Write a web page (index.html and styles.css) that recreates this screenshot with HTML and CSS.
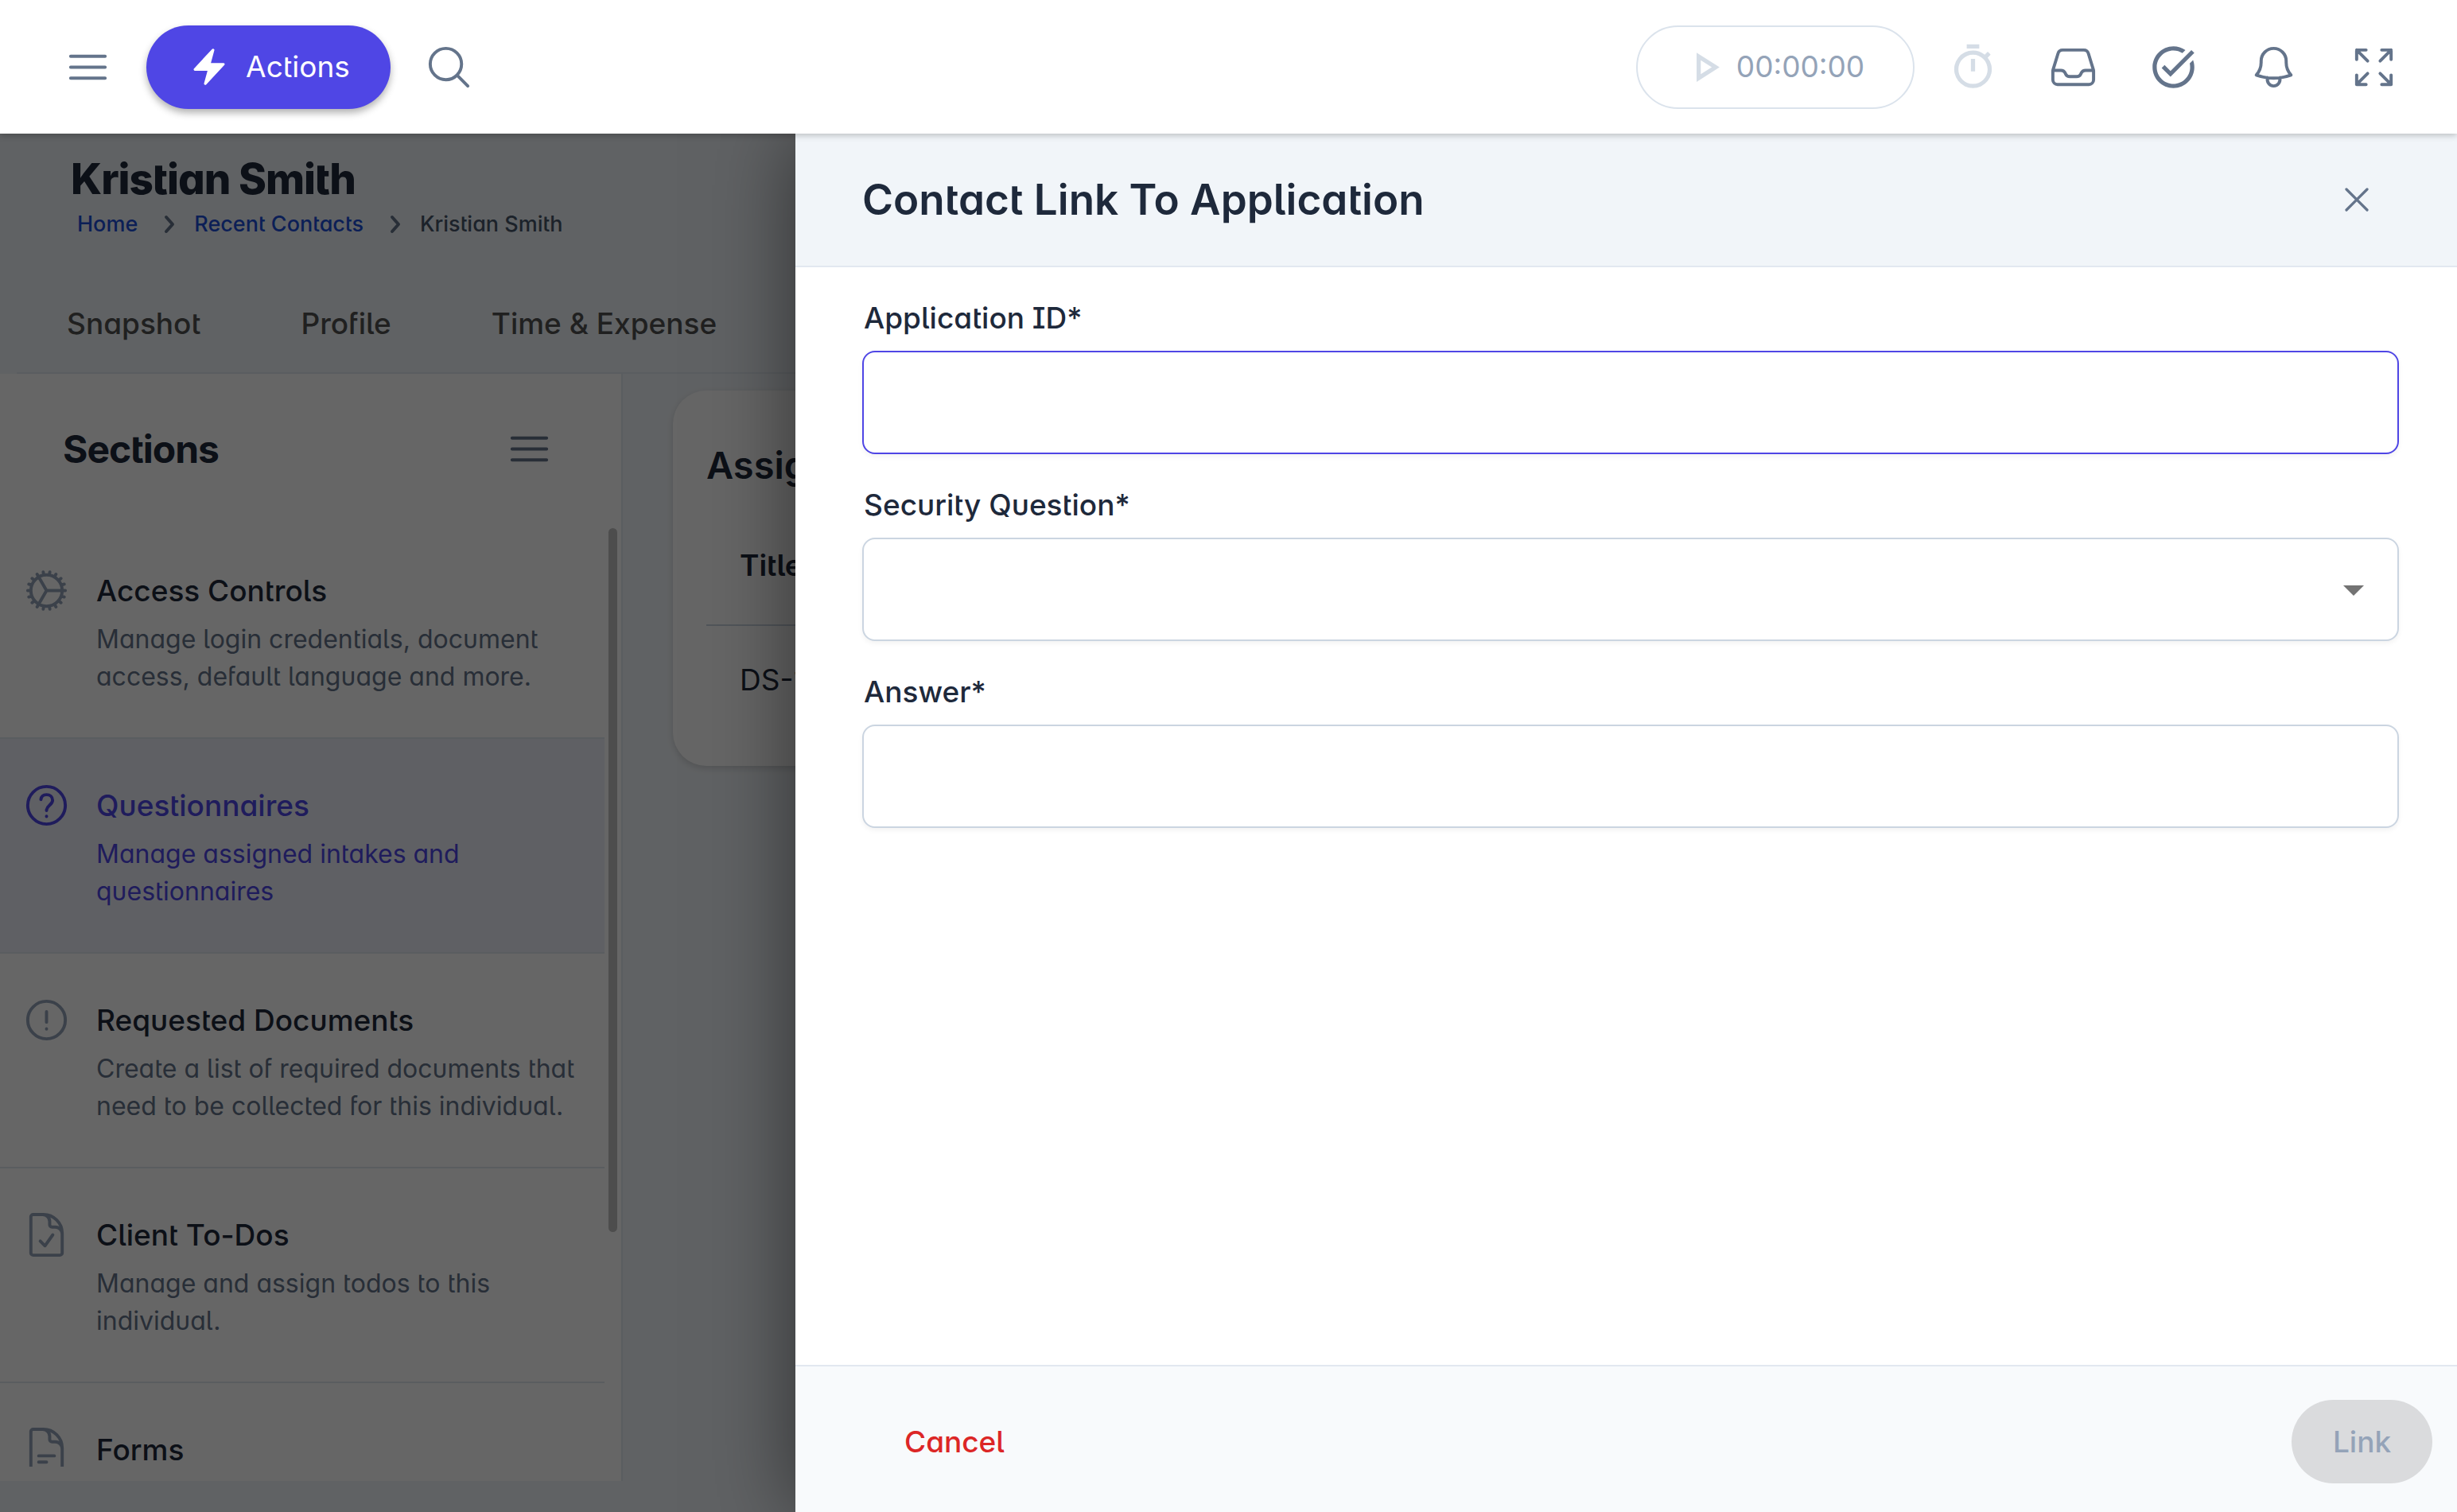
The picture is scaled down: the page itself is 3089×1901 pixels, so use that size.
FILE: index.html
```html
<!DOCTYPE html>
<html lang="en">
<head>
<meta charset="utf-8">
<title>Kristian Smith</title>
<link rel="stylesheet" href="styles.css">
</head>
<body>
<svg class="defs" aria-hidden="true">
  <symbol id="bars" viewBox="0 0 24 24"><path d="M3.75 6.75h16.5M3.75 12h16.5m-16.5 5.25h16.5"/></symbol>
  <symbol id="doc" viewBox="0 0 24 24"><path d="M19.5 14.25v-2.625a3.375 3.375 0 0 0-3.375-3.375h-1.5A1.125 1.125 0 0 1 13.5 7.125v-1.5a3.375 3.375 0 0 0-3.375-3.375H8.25m2.25 0H5.625c-.621 0-1.125.504-1.125 1.125v17.25c0 .621.504 1.125 1.125 1.125h12.75c.621 0 1.125-.504 1.125-1.125V11.25a9 9 0 0 0-9-9Z"/></symbol>
</svg>
<header class="topbar">
  <button class="icon-btn" aria-label="Menu"><svg class="icon"><use href="#bars"/></svg></button>
  <button class="actions"><svg class="bolt" viewBox="0 0 24 24"><path d="M14.615 1.595a.75.75 0 0 1 .359.852L12.982 9.75h7.268a.75.75 0 0 1 .548 1.262l-10.5 11.25a.75.75 0 0 1-1.272-.71l1.992-7.302H3.75a.75.75 0 0 1-.548-1.262l10.5-11.25a.75.75 0 0 1 .913-.143Z"/></svg>Actions</button>
  <button class="icon-btn" aria-label="Search"><svg class="icon" viewBox="0 0 24 24"><path d="m21 21-5.197-5.197m0 0A7.5 7.5 0 1 0 5.196 5.196a7.5 7.5 0 0 0 10.607 10.607Z"/></svg></button>
  <div class="tools">
    <button class="timer"><svg class="solid" viewBox="0 0 24 24"><path d="M8 5v14l11-7L8 5Zm2 3.64L15.27 12 10 15.36V8.64Z"/></svg>00:00:00</button>
    <button class="icon-btn" aria-label="Stopwatch"><svg class="solid" viewBox="0 0 24 24"><path d="M15 1H9v2h6V1Zm-4 13h2V8h-2v6Zm8.030-6.610 1.420-1.420c-.430-.510-.900-.990-1.410-1.410l-1.420 1.420A8.962 8.962 0 0 0 12 4a9 9 0 1 0 7.030 3.390ZM12 20c-3.870 0-7-3.130-7-7s3.130-7 7-7 7 3.130 7 7-3.130 7-7 7Z"/></svg></button>
    <button class="icon-btn" aria-label="Inbox"><svg class="icon" viewBox="0 0 24 24"><path d="M2.250 13.500h3.860a2.250 2.250 0 0 1 2.012 1.244l.256.512a2.250 2.250 0 0 0 2.013 1.244h3.218a2.250 2.250 0 0 0 2.013-1.244l.256-.512a2.250 2.250 0 0 1 2.013-1.244h3.859m-19.500.338V18a2.250 2.250 0 0 0 2.250 2.250h15A2.250 2.250 0 0 0 21.750 18v-4.162c0-.224-.034-.447-.1-.661L19.240 5.338a2.250 2.250 0 0 0-2.150-1.588H6.911a2.250 2.250 0 0 0-2.150 1.588L2.350 13.177a2.250 2.250 0 0 0-.1.661Z"/></svg></button>
    <button class="icon-btn" aria-label="Tasks"><svg class="solid dark" viewBox="0 0 24 24"><path d="M22 5.180 10.590 16.600l-4.240-4.240 1.410-1.410 2.830 2.830 10-10L22 5.180ZM12 20c-4.410 0-8-3.590-8-8s3.590-8 8-8c1.570 0 3.040.460 4.280 1.250l1.450-1.450A10.020 10.020 0 0 0 12 2C6.480 2 2 6.480 2 12s4.480 10 10 10 10-4.480 10-10c0-1.190-.220-2.330-.600-3.390l-1.600 1.600c.130.580.200 1.170.200 1.790 0 4.410-3.590 8-8 8Z"/></svg></button>
    <button class="icon-btn" aria-label="Notifications"><svg class="icon" viewBox="0 0 24 24"><path d="M14.857 17.082a23.848 23.848 0 0 0 5.454-1.310A8.967 8.967 0 0 1 18 9.750V9A6 6 0 0 0 6 9v.750a8.967 8.967 0 0 1-2.312 6.022c1.733.640 3.560 1.085 5.455 1.310m5.714 0a24.255 24.255 0 0 1-5.714 0m5.714 0a3 3 0 1 1-5.714 0"/></svg></button>
    <button class="icon-btn" aria-label="Full screen"><svg class="icon" viewBox="0 0 24 24"><path d="M3.750 3.750v4.500m0-4.500h4.500m-4.500 0L9 9M3.750 20.250v-4.500m0 4.500h4.500m-4.500 0L9 15M20.250 3.750h-4.500m4.500 0v4.500m0-4.500L15 9m5.250 11.250h-4.500m4.500 0v-4.500m0 4.500L15 15"/></svg></button>
  </div>
</header>
<div class="stage">
  <main class="page">
    <div class="page-head">
      <h1>Kristian Smith</h1>
      <nav class="crumbs" aria-label="Breadcrumb">
        <a href="#">Home</a>
        <svg class="chev" viewBox="0 0 20 20"><path d="m7.500 5.500 4 4.500-4 4.500"/></svg>
        <a href="#">Recent Contacts</a>
        <svg class="chev" viewBox="0 0 20 20"><path d="m7.500 5.500 4 4.500-4 4.500"/></svg>
        <span>Kristian Smith</span>
      </nav>
      <nav class="tabs" aria-label="Contact"><a href="#">Snapshot</a><a href="#">Profile</a><a href="#">Time &amp; Expense</a></nav>
    </div>
    <div class="columns">
      <aside class="sidebar">
        <div class="side-head"><h2>Sections</h2><button class="icon-btn" aria-label="Toggle sections"><svg class="icon"><use href="#bars"/></svg></button></div>
        <div class="side-scroll">
          <nav class="sections" aria-label="Sections">
            <a class="section" href="#"><svg class="icon" viewBox="0 0 24 24"><path d="M4.500 12a7.500 7.500 0 0 0 15 0m-15 0a7.500 7.500 0 1 1 15 0m-15 0H3m16.500 0H21m-1.500 0H12m-8.457 3.077 1.410-.513m14.095-5.130 1.410-.513M5.106 17.785l1.150-.964m11.490-9.642 1.149-.964M7.501 19.795l.750-1.300m7.500-12.990.750-1.300m-6.063 16.658.260-1.477m2.605-14.772.260-1.477m0 17.726-.260-1.477M10.698 4.614l-.260-1.477M16.500 19.794l-.750-1.299M7.500 4.205 12 12m6.894 5.785-1.149-.964M6.256 7.178l-1.150-.964m15.352 8.864-1.410-.513M4.954 9.435l-1.410-.514M12.002 12l-3.750 6.495"/></svg>
              <span class="text"><strong>Access Controls</strong><span>Manage login credentials, document access, default language and more.</span></span></a>
            <a class="section current" href="#"><svg class="icon" viewBox="0 0 24 24"><circle cx="12" cy="12" r="9"/><path d="M9.300 9.200C9.500 7.700 10.600 6.900 12 6.900c1.600 0 2.900 1.100 2.900 2.700 0 2.200-2.900 2.500-2.900 4.900M12 17.200v.1"/></svg>
              <span class="text"><strong>Questionnaires</strong><span>Manage assigned intakes and questionnaires</span></span></a>
            <a class="section" href="#"><svg class="icon" viewBox="0 0 24 24"><circle cx="12" cy="12" r="9"/><path d="M12 8v5M12 16.200v.1"/></svg>
              <span class="text"><strong>Requested Documents</strong><span>Create a list of required documents that need to be collected for this individual.</span></span></a>
            <a class="section" href="#"><svg class="icon" viewBox="0 0 24 24"><use href="#doc"/><path d="M9 15l2.250 2.250L15 12"/></svg>
              <span class="text"><strong>Client To-Dos</strong><span>Manage and assign todos to this individual.</span></span></a>
            <a class="section" href="#"><svg class="icon" viewBox="0 0 24 24"><use href="#doc"/><path d="M8.250 15h7.500m-7.500 3H12"/></svg>
              <span class="text"><strong>Forms</strong></span></a>
          </nav>
          <div class="track"><div class="thumb"></div></div>
        </div>
      </aside>
      <section class="card">
        <h2>Assigned</h2>
        <table><thead><tr><th>Title</th></tr></thead><tbody><tr><td>DS-11</td></tr></tbody></table>
      </section>
    </div>
  </main>
  <div class="backdrop"></div>
  <section class="drawer" role="dialog" aria-labelledby="drawer-title">
    <div class="drawer-head"><h2 id="drawer-title">Contact Link To Application</h2><button class="icon-btn" aria-label="Close"><svg class="close" viewBox="0 0 24 24"><path d="M6 18 18 6M6 6l12 12"/></svg></button></div>
    <form class="fields" id="link-form">
      <label for="app-id">Application ID*</label>
      <input class="control focused" id="app-id" type="text">
      <label for="question">Security Question*</label>
      <div class="select"><select class="control" id="question"><option></option></select><svg class="caret" viewBox="0 0 26 13"><path d="M0 0h26L13 13z"/></svg></div>
      <label for="answer">Answer*</label>
      <input class="control" id="answer" type="text">
    </form>
    <div class="drawer-foot"><button class="cancel">Cancel</button><button class="link" form="link-form" disabled>Link</button></div>
  </section>
</div>
</body>
</html>
```
FILE: styles.css
```css
* { box-sizing: border-box; }
html, body { height: 100%; }
body {
  margin: 0;
  display: flex;
  flex-direction: column;
  overflow: hidden;
  font-family: Inter, "Liberation Sans", sans-serif;
  font-feature-settings: "salt", "cv05", "cv11";
  font-size: 37px;
  line-height: 56px;
  color: #1e293b;
}
h1, h2 { margin: 0; }
a { color: inherit; text-decoration: none; }
button, input, select { font: inherit; font-feature-settings: inherit; color: inherit; }
button { display: flex; align-items: center; justify-content: center; padding: 0; border: 0; background: none; }
svg { flex: none; }
.defs { position: absolute; width: 0; height: 0; }
.icon, .close, .chev { fill: none; stroke: currentColor; stroke-width: 1.5; stroke-linecap: round; stroke-linejoin: round; }
.icon { width: 63px; height: 63px; }
.icon-btn { width: 105px; height: 105px; color: #64748b; }

.topbar {
  position: relative;
  z-index: 2;
  flex: none;
  display: flex;
  align-items: center;
  height: 168px;
  padding: 0 52px 0 58px;
  background: #fff;
  box-shadow: 0 2px 8px rgba(0, 0, 0, .24);
}
.actions {
  gap: 20px;
  width: 307px;
  height: 105px;
  margin: 0 21px;
  padding-left: 2px;
  border-radius: 53px;
  background: #4f46e5;
  color: #fff;
  box-shadow: 0 5px 10px rgba(0, 0, 0, .3);
}
.bolt { width: 52px; height: 52px; fill: #fff; }
.tools { display: flex; align-items: center; gap: 21px; margin-left: auto; }
.timer {
  gap: 8px;
  width: 350px;
  height: 105px;
  padding-right: 8px;
  border: 2px solid #dbe3ec;
  border-radius: 53px;
  color: #94a3b8;
}
.solid { width: 63px; height: 63px; fill: #d5dde6; }
.solid.dark { fill: #64748b; }

.stage { position: relative; flex: 1; min-height: 0; }
.page { display: flex; flex-direction: column; height: 100%; background: #f1f5f9; }
.page-head { flex: none; margin-left: 21px; border-bottom: 2px solid #e2e8f0; }
.page-head h1 { padding: 25px 0 0 68px; font-size: 53px; line-height: 64px; font-weight: 800; letter-spacing: -1px; }
.crumbs { display: flex; align-items: center; padding-left: 76px; font-size: 27px; line-height: 50px; font-weight: 500; color: #475569; }
.crumbs a { color: #1d4ed8; }
.chev { width: 40px; height: 40px; margin: 0 10px 0 21px; stroke-width: 2; color: #64748b; }
.tabs { display: flex; align-items: center; gap: 126px; height: 161px; padding: 39px 0 0 63px; font-weight: 500; color: #525252; }
.columns { flex: 1; min-height: 0; display: flex; padding-bottom: 39px; }

.sidebar { flex: none; display: flex; flex-direction: column; width: 783px; border-right: 2px solid #e2e8f0; background: #fff; }
.side-head { flex: none; display: flex; justify-content: space-between; align-items: center; height: 189px; padding: 0 63px 0 79px; }
.side-head h2 { font-size: 48px; font-weight: 700; letter-spacing: -1px; }
.side-scroll { flex: 1; min-height: 0; display: flex; margin-bottom: 18px; overflow: hidden; }
.sections { flex: 1; }
.section { display: flex; gap: 31px; height: 270px; padding: 52px 20px 0 27px; border-bottom: 2px solid #e2e8f0; color: #94a3b8; }
.text { display: flex; flex-direction: column; gap: 9px; padding-top: 4px; font-size: 32px; line-height: 47px; color: #64748b; }
.text strong { font-size: 37px; line-height: 56px; font-weight: 500; color: #1e293b; }
.section.current, .current .text, .current strong { color: #4f46e5; }
.section.current { background: #eef0fa; }
.track { width: 21px; padding: 5px; }
.thumb { width: 11px; height: 885px; border-radius: 6px; background: #c1c1c1; }

.card { flex: 1; align-self: flex-start; height: 472px; margin: 21px 63px 0; padding: 66px 42px 0; border-radius: 42px; background: #fff; box-shadow: 0 3px 8px rgba(0, 0, 0, .15); }
.card h2 { font-size: 47px; font-weight: 600; }
.card table { width: 100%; border-collapse: collapse; text-align: left; }
.card th, .card td { padding: 0 42px; }
.card th { height: 173px; padding-top: 24px; border-bottom: 2px solid #cbd5e1; font-weight: 600; }
.card td { height: 136px; }

.backdrop { position: absolute; inset: 0; background: rgba(0, 0, 0, .6); }
.drawer {
  position: absolute;
  inset: 0 0 0 1000px;
  display: flex;
  flex-direction: column;
  background: #fff;
  box-shadow: 0 0 100px rgba(0, 0, 0, .5);
}
.drawer-head { flex: none; display: flex; align-items: center; justify-content: space-between; height: 168px; padding: 0 74px 0 84px; border-bottom: 2px solid #e2e8f0; background: #f1f5f9; }
.drawer-head h2 { font-size: 53px; font-weight: 600; }
.close { width: 52px; height: 52px; }
.fields { flex: 1; display: flex; flex-direction: column; padding: 36px 73px 0 84px; }
.fields label { padding-left: 2px; font-weight: 500; }
.control {
  display: block;
  width: 100%;
  height: 130px;
  margin: 13px 0 36px;
  padding: 0 32px;
  border: 2px solid #cbd5e1;
  border-radius: 16px;
  outline: 0;
  background: #fff;
  box-shadow: 0 3px 6px rgba(0, 0, 0, .05);
  appearance: none;
}
.control.focused { border-color: #4f46e5; }
.select { position: relative; }
.caret { position: absolute; right: 44px; top: 73px; width: 26px; height: 13px; fill: #737373; }
.drawer-foot { flex: none; display: flex; align-items: center; justify-content: space-between; height: 185px; padding: 6px 31px 0 137px; border-top: 2px solid #e2e8f0; background: #f8fafc; }
.drawer-foot button { height: 105px; border-radius: 53px; font-weight: 500; }
.cancel { color: #dc2626; }
.link { width: 177px; background: #dadbdd; color: #94a3b8; }
```
